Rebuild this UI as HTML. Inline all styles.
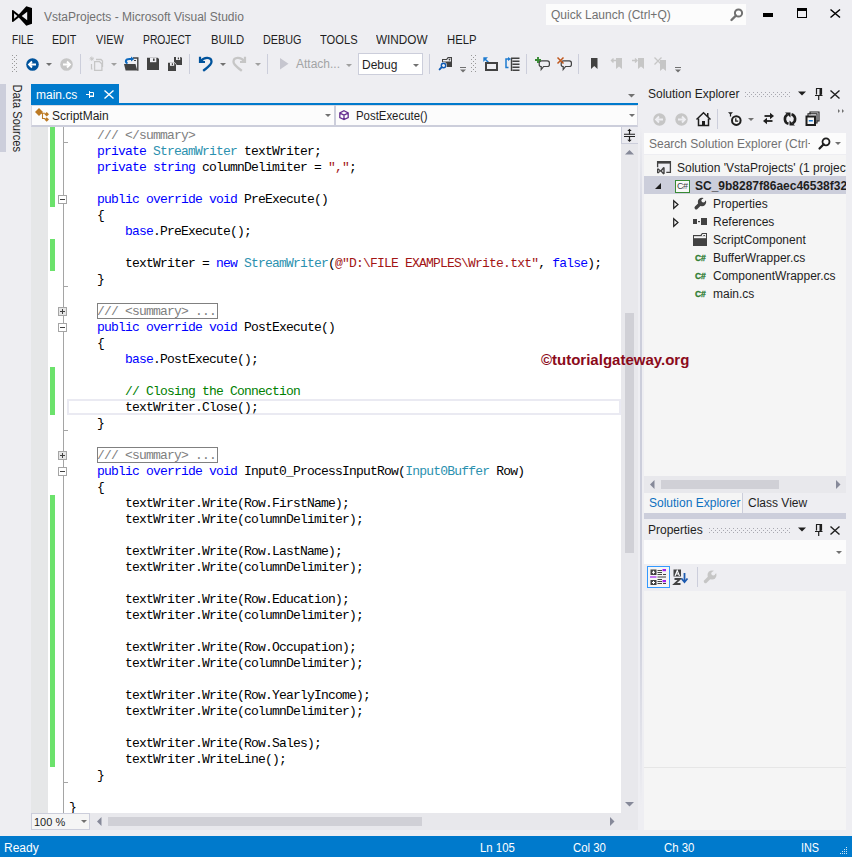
<!DOCTYPE html>
<html><head><meta charset="utf-8">
<style>
*{box-sizing:border-box}
html,body{margin:0;padding:0}
body{width:852px;height:857px;overflow:hidden;position:relative;background:#EEEEF2;font-family:"Liberation Sans",sans-serif;font-size:12px;color:#1E1E1E}
.a{position:absolute}
svg.a{overflow:visible}
.t{position:absolute;white-space:pre;line-height:14px;font-size:12px}
.code{position:absolute;left:69px;top:128px;margin:0;font-family:"Liberation Mono",monospace;font-size:13px;letter-spacing:-0.8px;line-height:16px;white-space:pre;color:#000}
.k{color:#0000FF}.ty{color:#2B91AF}.s{color:#A31515}.c{color:#008000}.g{color:#808080}
</style></head><body>

<svg class="a" style="left:12px;top:6px;" width="21" height="21" viewBox="0 0 21 21"><path d="M0 4.8 Q0 3.8 1 4 L6.8 8.5 L14.3 0.2 L20 2 V17.8 L14.3 19.8 L6.8 11.5 L1 16 Q0 16.2 0 15.2 Z M2.1 7.2 V12.8 L5.3 10 Z M9.7 10 L15.2 5.8 V14.2 Z" fill="#000" fill-rule="evenodd"/></svg>
<div class="t" style="left:44px;top:10px;color:#717171;">VstaProjects - Microsoft Visual Studio</div>
<div class="a" style="left:546px;top:4px;width:200px;height:21px;background:#FCFCFC;"></div>
<div class="t" style="left:551px;top:8px;color:#717171;">Quick Launch (Ctrl+Q)</div>
<svg class="a" style="left:730px;top:8px;" width="14" height="14" viewBox="0 0 14 14"><circle cx="8.5" cy="5" r="3.6" fill="none" stroke="#717171" stroke-width="2"/><path d="M6 7.5 L1.5 12" stroke="#717171" stroke-width="2.4" stroke-linecap="round"/></svg>
<div class="a" style="left:763px;top:13px;width:10px;height:4px;background:#000;"></div>
<div class="a" style="left:797px;top:8px;width:10px;height:10px;border:1px solid #000;border-top-width:3px"></div>
<svg class="a" style="left:830px;top:9px;" width="11" height="9" viewBox="0 0 11 9"><path d="M0.5 0.5 L10 8.5 M10 0.5 L0.5 8.5" stroke="#000" stroke-width="1.5"/></svg>
<div class="t" style="left:12px;top:33px;transform:scaleX(0.85);transform-origin:0 0;">FILE</div>
<div class="t" style="left:52px;top:33px;transform:scaleX(0.89);transform-origin:0 0;">EDIT</div>
<div class="t" style="left:96px;top:33px;transform:scaleX(0.9);transform-origin:0 0;">VIEW</div>
<div class="t" style="left:143px;top:33px;transform:scaleX(0.86);transform-origin:0 0;">PROJECT</div>
<div class="t" style="left:211px;top:33px;transform:scaleX(0.94);transform-origin:0 0;">BUILD</div>
<div class="t" style="left:263px;top:33px;transform:scaleX(0.9);transform-origin:0 0;">DEBUG</div>
<div class="t" style="left:320px;top:33px;transform:scaleX(0.93);transform-origin:0 0;">TOOLS</div>
<div class="t" style="left:376px;top:33px;transform:scaleX(0.98);transform-origin:0 0;">WINDOW</div>
<div class="t" style="left:447px;top:33px;transform:scaleX(0.94);transform-origin:0 0;">HELP</div>
<div class="a" style="left:12px;top:55px;width:5px;height:18px;background-image:radial-gradient(circle at 0.5px 0.5px,#999 0.6px,transparent 0.8px);background-size:4px 4px"></div>
<div class="a" style="left:14px;top:57px;width:4px;height:16px;background-image:radial-gradient(circle at 0.5px 0.5px,#999 0.6px,transparent 0.8px);background-size:4px 4px"></div>
<svg class="a" style="left:26px;top:58px;" width="13" height="13" viewBox="0 0 13 13"><circle cx="6.5" cy="6.5" r="6.3" fill="#00539C"/><path d="M3 6.5 H10 M6 3.5 L3 6.5 L6 9.5" stroke="#fff" stroke-width="1.8" fill="none"/></svg>
<svg class="a" style="left:46px;top:63px;" width="6" height="3" viewBox="0 0 6 3"><path d="M0 0 H6 L3 3 Z" fill="#717171"/></svg>
<svg class="a" style="left:60px;top:58px;" width="13" height="13" viewBox="0 0 13 13"><circle cx="6.5" cy="6.5" r="6.3" fill="#C6C6C6"/><path d="M3 6.5 H10 M7 3.5 L10 6.5 L7 9.5" stroke="#fff" stroke-width="1.8" fill="none"/></svg>
<div class="a" style="left:80px;top:54px;width:1px;height:20px;background:#CCCEDB;"></div>
<svg class="a" style="left:89px;top:56px;" width="15" height="16" viewBox="0 0 15 16"><path d="M1.2 1.2 L4.3 4.3 M4.3 1.2 L1.2 4.3 M2.75 0.5 V5 M0.5 2.75 H5" stroke="#C6C6C6" stroke-width="0.9"/><path d="M7 3.5 H12 L13.5 5 V11" stroke="#C6C6C6" stroke-width="1.3" fill="none"/><path d="M2.5 8 V13 H3.5" stroke="#C6C6C6" stroke-width="1.2" fill="none"/><path d="M5.6 5.6 H10.5 L12.9 8 V14.4 H5.6 Z" stroke="#C6C6C6" stroke-width="1.3" fill="#EEEEF2"/></svg>
<svg class="a" style="left:111px;top:63px;" width="6" height="3" viewBox="0 0 6 3"><path d="M0 0 H6 L3 3 Z" fill="#A0A0A0"/></svg>
<svg class="a" style="left:124px;top:57px;" width="15" height="15" viewBox="0 0 15 15"><path d="M9 1 H13.8 V13.8" stroke="#424242" stroke-width="1.4" fill="none"/><rect x="10" y="3" width="2" height="1" fill="#424242"/><path d="M0 7 H11.5 L13.2 13.6 H1.6 Z" fill="#424242"/><path d="M3.5 6.5 C0.8 5 1.5 2 5.5 2 H7.5" stroke="#0E6ABF" stroke-width="2" fill="none"/><path d="M7 -0.6 L10.2 2 L7 4.6 Z" fill="#0E6ABF"/></svg>
<svg class="a" style="left:147px;top:57px;" width="12" height="13" viewBox="0 0 12 13"><path d="M0 0.8 H10.7 L12 2.1 V13 H0 Z" fill="#424242"/><rect x="3" y="0.8" width="6.3" height="4.4" fill="#EEEEF2"/><rect x="6" y="1.5" width="1.6" height="2.4" fill="#424242"/></svg>
<svg class="a" style="left:168px;top:57px;" width="15" height="14" viewBox="0 0 15 14"><path d="M6 0 H13 L14 1 V8 H6 Z" fill="#424242"/><rect x="8" y="0" width="4.2" height="3" fill="#EEEEF2"/><rect x="9.8" y="0.5" width="1.2" height="1.8" fill="#424242"/><path d="M0 5.8 H7 L8 6.8 V14 H0 Z" fill="#424242"/><rect x="2" y="5.8" width="4.2" height="3" fill="#EEEEF2"/><rect x="3.8" y="6.3" width="1.2" height="1.8" fill="#424242"/><path d="M6.3 5.2 L8.5 7.8" stroke="#EEEEF2" stroke-width="0.8"/></svg>
<div class="a" style="left:189px;top:54px;width:1px;height:20px;background:#CCCEDB;"></div>
<svg class="a" style="left:198px;top:56px;" width="15" height="16" viewBox="0 0 15 16"><path d="M2 0.8 V6 H7" stroke="#00539C" stroke-width="2.2" fill="none"/><path d="M3 5 C6 0.8 13.5 0.8 13.5 5.8 C13.5 9 10 11 5.2 14.8" stroke="#00539C" stroke-width="2.3" fill="none"/></svg>
<svg class="a" style="left:220px;top:63px;" width="6" height="3" viewBox="0 0 6 3"><path d="M0 0 H6 L3 3 Z" fill="#717171"/></svg>
<svg class="a" style="left:232px;top:56px;" width="15" height="16" viewBox="0 0 15 16"><path d="M13 0.8 V6 H8" stroke="#C6C6C6" stroke-width="2.2" fill="none"/><path d="M12 5 C9 0.8 1.5 0.8 1.5 5.8 C1.5 9 5 11 9.8 14.8" stroke="#C6C6C6" stroke-width="2.3" fill="none"/></svg>
<svg class="a" style="left:255px;top:63px;" width="6" height="3" viewBox="0 0 6 3"><path d="M0 0 H6 L3 3 Z" fill="#A0A0A0"/></svg>
<div class="a" style="left:267px;top:54px;width:1px;height:20px;background:#CCCEDB;"></div>
<svg class="a" style="left:280px;top:58px;" width="9" height="12" viewBox="0 0 9 12"><path d="M0 0 L8.5 5.7 L0 11.5 Z" fill="#C6C6CF"/></svg>
<div class="t" style="left:296px;top:57px;color:#A2A4A5;">Attach...</div>
<svg class="a" style="left:346px;top:64px;" width="6" height="3" viewBox="0 0 6 3"><path d="M0 0 H6 L3 3 Z" fill="#A0A0A0"/></svg>
<div class="a" style="left:358px;top:53px;width:65px;height:22px;background:#fff;border:1px solid #CCCEDB"></div>
<div class="t" style="left:362px;top:58px;">Debug</div>
<svg class="a" style="left:413px;top:64px;" width="6" height="3" viewBox="0 0 6 3"><path d="M0 0 H6 L3 3 Z" fill="#717171"/></svg>
<div class="a" style="left:429px;top:54px;width:1px;height:20px;background:#CCCEDB;"></div>
<svg class="a" style="left:438px;top:56px;" width="15" height="15" viewBox="0 0 15 15"><path d="M4 3 H8.3 L9.8 1 H14 V11 H4 Z" fill="#424242"/><path d="M5 4 H9 L10.3 2.2 H13 V5.6 H5 Z" fill="#EEEEF2"/><circle cx="11.5" cy="3.6" r="0.9" fill="#424242"/><circle cx="5.5" cy="9.5" r="3.4" fill="#EEEEF2"/><circle cx="5.5" cy="9.5" r="2.2" fill="#EEEEF2" stroke="#0E5BB5" stroke-width="1.4"/><path d="M3.8 11.2 L1.6 13.4" stroke="#0E5BB5" stroke-width="1.9" stroke-linecap="round"/></svg>
<svg class="a" style="left:460px;top:67px;" width="6" height="6" viewBox="0 0 6 6"><rect x="0" y="0" width="6" height="1" fill="#717171"/><path d="M0 2.5 H6 L3 5.5 Z" fill="#717171"/></svg>
<div class="a" style="left:471px;top:55px;width:5px;height:18px;background-image:radial-gradient(circle at 0.5px 0.5px,#999 0.6px,transparent 0.8px);background-size:4px 4px"></div>
<div class="a" style="left:473px;top:57px;width:4px;height:16px;background-image:radial-gradient(circle at 0.5px 0.5px,#999 0.6px,transparent 0.8px);background-size:4px 4px"></div>
<svg class="a" style="left:483px;top:57px;" width="15" height="14" viewBox="0 0 15 14"><path d="M1.5 1.5 L5.5 5.5" stroke="#1E7BD0" stroke-width="1.6"/><path d="M0.3 0.3 H5 L0.3 5 Z" fill="#1E7BD0"/><rect x="3" y="6" width="11" height="7" fill="none" stroke="#424242" stroke-width="2"/><rect x="5" y="8.5" width="7" height="2" fill="#EEEEF2"/></svg>
<svg class="a" style="left:505px;top:57px;" width="15" height="14" viewBox="0 0 15 14"><path d="M3.5 2 H1 V10.5 H3.5" fill="none" stroke="#1E7BD0" stroke-width="1.5"/><path d="M3 0 L6 2 L3 4 Z" fill="#1E7BD0"/><path d="M6 1.2 H14.5 M7.5 4.2 H14.5 M7.5 7.2 H14.5 M7.5 10.2 H14.5 M7.5 13.2 H14.5 M6.5 1 V14" stroke="#424242" stroke-width="1.4"/></svg>
<div class="a" style="left:526px;top:54px;width:1px;height:20px;background:#CCCEDB;"></div>
<svg class="a" style="left:535px;top:57px;" width="16" height="14" viewBox="0 0 16 14"><path d="M6.5 3.8 H12.3 Q14.4 3.8 14.4 5.9 V7.4 Q14.4 9.5 12.3 9.5 H8.6 L6.2 12.6 V9.5 Q4.2 9.5 4.2 7.4 V5.9 Q4.2 3.8 6.5 3.8 Z" fill="#EEEEF2" stroke="#424242" stroke-width="1.2"/><path d="M3 0 V6 M0 3 H6" stroke="#388A34" stroke-width="1.9"/></svg>
<svg class="a" style="left:557px;top:57px;" width="16" height="14" viewBox="0 0 16 14"><path d="M6.5 3.8 H12.3 Q14.4 3.8 14.4 5.9 V7.4 Q14.4 9.5 12.3 9.5 H8.6 L6.2 12.6 V9.5 Q4.2 9.5 4.2 7.4 V5.9 Q4.2 3.8 6.5 3.8 Z" fill="#EEEEF2" stroke="#424242" stroke-width="1.2"/><path d="M0.5 0.5 L6.5 6.5 M6.5 0.5 L0.5 6.5" stroke="#C0581E" stroke-width="1.5"/></svg>
<div class="a" style="left:578px;top:54px;width:1px;height:20px;background:#CCCEDB;"></div>
<svg class="a" style="left:591px;top:58px;" width="7" height="11" viewBox="0 0 7 11"><path d="M0 0 H6.5 V11 L3.25 8 L0 11 Z" fill="#424242"/></svg>
<svg class="a" style="left:611px;top:57px;" width="12" height="13" viewBox="0 0 12 13"><path d="M5 1 H11 V12 L8 9.5 L5 12 Z" fill="#C6C6C6"/><path d="M0.5 3.5 H5 M2.5 1.5 L0.5 3.5 L2.5 5.5" stroke="#C6C6C6" stroke-width="1.4" fill="none"/></svg>
<svg class="a" style="left:632px;top:57px;" width="13" height="13" viewBox="0 0 13 13"><path d="M6 1 H12 V12 L9 9.5 L6 12 Z" fill="#C6C6C6"/><path d="M0 3.5 H5 M3 1.5 L5 3.5 L3 5.5" stroke="#C6C6C6" stroke-width="1.4" fill="none"/></svg>
<svg class="a" style="left:654px;top:57px;" width="13" height="14" viewBox="0 0 13 14"><path d="M6 3 H12 V14 L9 11.5 L6 14 Z" fill="#C6C6C6"/><path d="M0.5 0.5 L7.5 7.5 M7.5 0.5 L0.5 7.5" stroke="#C6C6C6" stroke-width="1.3"/></svg>
<svg class="a" style="left:675px;top:67px;" width="6" height="6" viewBox="0 0 6 6"><rect x="0" y="0" width="6" height="1" fill="#717171"/><path d="M0 2.5 H6 L3 5.5 Z" fill="#717171"/></svg>
<div class="a" style="left:0px;top:84px;width:6px;height:68px;background:#CCCEDB;"></div>
<div class="t" style="left:-19px;top:111px;width:72px;transform:rotate(90deg) scaleX(0.93);transform-origin:36px 7px;color:#1E1E1E">Data Sources</div>
<svg class="a" style="left:628px;top:94px;" width="7" height="4" viewBox="0 0 7 4"><path d="M0 0 H7 L3.5 3.5 Z" fill="#717171"/></svg>
<div class="a" style="left:31px;top:84px;width:88px;height:21px;background:#007ACC;"></div>
<div class="a" style="left:31px;top:103px;width:607px;height:2px;background:#007ACC;"></div>
<div class="t" style="left:36px;top:88px;color:#fff;">main.cs</div>
<svg class="a" style="left:86px;top:91px;" width="9" height="7" viewBox="0 0 9 7"><path d="M0 3.5 H3.5 M3.5 0 V7" stroke="#fff" stroke-width="1" fill="none"/><path d="M4 1.5 H7.5 V5.5 H4" stroke="#fff" stroke-width="1" fill="none"/><rect x="4" y="4.5" width="4" height="1.5" fill="#fff"/></svg>
<svg class="a" style="left:104px;top:90px;" width="10" height="9" viewBox="0 0 10 9"><path d="M0.5 0.5 L9.5 8.5 M9.5 0.5 L0.5 8.5" stroke="#fff" stroke-width="1.4"/></svg>
<div class="a" style="left:31px;top:105px;width:607px;height:22px;background:#FCFCFC;border-bottom:2px solid #CCCEDB;border-left:1px solid #DADAE2;border-top:1px solid #DADAE2;border-right:1px solid #DADAE2"></div>
<div class="a" style="left:334px;top:105px;width:2px;height:20px;background:#CCCEDB;"></div>
<svg class="a" style="left:35px;top:108px;" width="15" height="14" viewBox="0 0 15 14"><path d="M0 4 L4 0 L8 4 L4 8 Z" fill="#BC7A24"/><path d="M6 5.2 H10 M7.5 5.2 V10.5 H10" stroke="#BC7A24" stroke-width="1.1" fill="none"/><path d="M9.4 6.2 L11.7 3.9 L14 6.2 L11.7 8.5 Z M9.4 11.5 L11.7 9.2 L14 11.5 L11.7 13.8 Z" fill="#BC7A24"/></svg>
<div class="t" style="left:52px;top:109px;">ScriptMain</div>
<svg class="a" style="left:325px;top:114px;" width="6" height="3" viewBox="0 0 6 3"><path d="M0 0 H6 L3 3 Z" fill="#717171"/></svg>
<svg class="a" style="left:339px;top:110px;" width="10" height="10" viewBox="0 0 10 10"><path d="M5 0.7 L9.2 3 V7.5 L5 9.5 L0.8 7.5 V3 Z M0.8 3 L5 5.2 L9.2 3 M5 5.2 V9.5" stroke="#652D90" stroke-width="1.3" fill="none"/></svg>
<div class="t" style="left:356px;top:109px;transform:scaleX(0.95);transform-origin:0 0;">PostExecute()</div>
<svg class="a" style="left:629px;top:114px;" width="6" height="3" viewBox="0 0 6 3"><path d="M0 0 H6 L3 3 Z" fill="#717171"/></svg>
<div class="a" style="left:31px;top:127px;width:590px;height:686px;background:#fff;"></div>
<div class="a" style="left:31px;top:127px;width:17px;height:686px;background:#E6E7E8;"></div>
<div class="a" style="left:50px;top:127px;width:5px;height:80px;background:#6CE26C;"></div>
<div class="a" style="left:50px;top:239px;width:5px;height:32px;background:#6CE26C;"></div>
<div class="a" style="left:50px;top:367px;width:5px;height:48px;background:#6CE26C;"></div>
<div class="a" style="left:50px;top:495px;width:5px;height:272px;background:#6CE26C;"></div>
<div class="a" style="left:63px;top:127px;width:1px;height:686px;background:#A5A5A5;"></div>
<div class="a" style="left:63px;top:142px;width:5px;height:1px;background:#A5A5A5;"></div>
<div class="a" style="left:63px;top:286px;width:5px;height:1px;background:#A5A5A5;"></div>
<div class="a" style="left:63px;top:430px;width:5px;height:1px;background:#A5A5A5;"></div>
<div class="a" style="left:63px;top:782px;width:5px;height:1px;background:#A5A5A5;"></div>
<div class="a" style="left:58px;top:195px;width:9px;height:9px;background:#fff;border:1px solid #A5A5A5"></div>
<div class="a" style="left:60px;top:199px;width:5px;height:1px;background:#424242;"></div>
<div class="a" style="left:58px;top:307px;width:9px;height:9px;background:#E6E6E6;border:1px solid #A5A5A5"></div>
<div class="a" style="left:60px;top:311px;width:5px;height:1px;background:#424242;"></div>
<div class="a" style="left:62px;top:309px;width:1px;height:5px;background:#424242;"></div>
<div class="a" style="left:58px;top:323px;width:9px;height:9px;background:#fff;border:1px solid #A5A5A5"></div>
<div class="a" style="left:60px;top:327px;width:5px;height:1px;background:#424242;"></div>
<div class="a" style="left:58px;top:451px;width:9px;height:9px;background:#E6E6E6;border:1px solid #A5A5A5"></div>
<div class="a" style="left:60px;top:455px;width:5px;height:1px;background:#424242;"></div>
<div class="a" style="left:62px;top:453px;width:1px;height:5px;background:#424242;"></div>
<div class="a" style="left:58px;top:467px;width:9px;height:9px;background:#fff;border:1px solid #A5A5A5"></div>
<div class="a" style="left:60px;top:471px;width:5px;height:1px;background:#424242;"></div>
<div class="a" style="left:97px;top:303px;width:121px;height:16px;border:1px solid #808080"></div>
<div class="a" style="left:97px;top:447px;width:121px;height:16px;border:1px solid #808080"></div>
<div class="a" style="left:67px;top:399px;width:554px;height:16px;border:2px solid #EAEAF2"></div>
<pre class="code" style="margin:0">    <span class="g">/// &lt;/summary&gt;</span>
    <span class="k">private</span> <span class="ty">StreamWriter</span> textWriter;
    <span class="k">private</span> <span class="k">string</span> columnDelimiter = <span class="s">","</span>;

    <span class="k">public</span> <span class="k">override</span> <span class="k">void</span> PreExecute()
    {
        <span class="k">base</span>.PreExecute();

        textWriter = <span class="k">new</span> <span class="ty">StreamWriter</span>(<span class="s">@"D:\FILE EXAMPLES\Write.txt"</span>, <span class="k">false</span>);
    }

    <span class="g">/// &lt;summary&gt; ...</span>
    <span class="k">public</span> <span class="k">override</span> <span class="k">void</span> PostExecute()
    {
        <span class="k">base</span>.PostExecute();

        <span class="c">// Closing the Connection</span>
        textWriter.Close();
    }

    <span class="g">/// &lt;summary&gt; ...</span>
    <span class="k">public</span> <span class="k">override</span> <span class="k">void</span> Input0_ProcessInputRow(<span class="ty">Input0Buffer</span> Row)
    {
        textWriter.Write(Row.FirstName);
        textWriter.Write(columnDelimiter);

        textWriter.Write(Row.LastName);
        textWriter.Write(columnDelimiter);

        textWriter.Write(Row.Education);
        textWriter.Write(columnDelimiter);

        textWriter.Write(Row.Occupation);
        textWriter.Write(columnDelimiter);

        textWriter.Write(Row.YearlyIncome);
        textWriter.Write(columnDelimiter);

        textWriter.Write(Row.Sales);
        textWriter.WriteLine();
    }

}</pre>
<div class="a" style="left:621px;top:127px;width:17px;height:686px;background:#E8E8EC;"></div>
<div class="a" style="left:621px;top:127px;width:17px;height:17px;background:#EBEBF0;border-left:1px solid #CCCEDB;border-bottom:1px solid #CCCEDB"></div>
<svg class="a" style="left:624px;top:128px;" width="11" height="15" viewBox="0 0 11 15"><path d="M0 6.3 H11 M0 8.5 H11" stroke="#1E1E1E" stroke-width="1.1"/><path d="M5.5 2 V6.3 M5.5 8.5 V12.8" stroke="#1E1E1E" stroke-width="1.2"/><path d="M3.3 3 L5.5 0.8 L7.7 3 Z M3.3 11.8 L5.5 14 L7.7 11.8 Z" fill="#1E1E1E"/></svg>
<svg class="a" style="left:625px;top:150px;" width="9" height="5" viewBox="0 0 9 5"><path d="M0 4.5 L4.5 0 L9 4.5 Z" fill="#868999"/></svg>
<div class="a" style="left:625px;top:313px;width:9px;height:240px;background:#D0D0D6;"></div>
<svg class="a" style="left:625px;top:802px;" width="9" height="5" viewBox="0 0 9 5"><path d="M0 0 H9 L4.5 4.5 Z" fill="#868999"/></svg>
<div class="a" style="left:31px;top:813px;width:607px;height:17px;background:#E8E8EC;"></div>
<div class="a" style="left:31px;top:813px;width:59px;height:17px;background:#F5F5F5;border:1px solid #CCCEDB"></div>
<div class="t" style="left:34px;top:815px;font-size:11px;">100 %</div>
<svg class="a" style="left:81px;top:820px;" width="6" height="3" viewBox="0 0 6 3"><path d="M0 0 H6 L3 3 Z" fill="#717171"/></svg>
<svg class="a" style="left:97px;top:817px;" width="5" height="9" viewBox="0 0 5 9"><path d="M4.5 0 V9 L0 4.5 Z" fill="#868999"/></svg>
<div class="a" style="left:108px;top:817px;width:314px;height:9px;background:#D0D0D6;"></div>
<svg class="a" style="left:610px;top:817px;" width="5" height="9" viewBox="0 0 5 9"><path d="M0 0 V9 L4.5 4.5 Z" fill="#868999"/></svg>
<div class="a" style="left:640px;top:127px;width:2px;height:680px;background:linear-gradient(#EEEEF2 0px,#CCCEDB 130px,#CCCEDB 480px,#EEEEF2 680px);"></div>
<div class="t" style="left:648px;top:87px;">Solution Explorer</div>
<svg class="a" style="left:745px;top:92px;" width="45" height="5" viewBox="0 0 45 5"><defs><pattern id="gp" width="4" height="4" patternUnits="userSpaceOnUse"><rect width="1" height="1" fill="#A8A8B0"/><rect x="2" y="2" width="1" height="1" fill="#A8A8B0"/></pattern></defs><rect width="45" height="5" fill="url(#gp)"/></svg>
<svg class="a" style="left:798px;top:91px;" width="8" height="5" viewBox="0 0 8 5"><path d="M0 0.5 H8 L4 4.5 Z" fill="#1E1E1E"/></svg>
<svg class="a" style="left:815px;top:88px;" width="8" height="12" viewBox="0 0 8 12"><path d="M1 0.5 H6.5 V6.5 M1.5 0.5 V6.5" stroke="#1E1E1E" stroke-width="1.2" fill="none"/><rect x="4.5" y="0.5" width="2" height="6.5" fill="#1E1E1E"/><path d="M0 7.5 H7.5 M3.7 7.5 V12" stroke="#1E1E1E" stroke-width="1.2"/></svg>
<svg class="a" style="left:830px;top:90px;" width="10" height="9" viewBox="0 0 10 9"><path d="M0.5 0.5 L9.5 8.5 M9.5 0.5 L0.5 8.5" stroke="#1E1E1E" stroke-width="1.4"/></svg>
<svg class="a" style="left:653px;top:113px;" width="13" height="13" viewBox="0 0 13 13"><circle cx="6.5" cy="6.5" r="6.2" fill="#C6C6C6"/><path d="M3 6.5 H10 M6 3.5 L3 6.5 L6 9.5" stroke="#EEEEF2" stroke-width="1.8" fill="none"/></svg>
<svg class="a" style="left:675px;top:113px;" width="13" height="13" viewBox="0 0 13 13"><circle cx="6.5" cy="6.5" r="6.2" fill="#C6C6C6"/><path d="M3 6.5 H10 M7 3.5 L10 6.5 L7 9.5" stroke="#EEEEF2" stroke-width="1.8" fill="none"/></svg>
<svg class="a" style="left:696px;top:112px;" width="15" height="14" viewBox="0 0 15 14"><path d="M0.5 7.5 L7.5 0.8 L14.5 7.5" stroke="#1E1E1E" stroke-width="1.5" fill="none"/><path d="M2.5 6.5 V13.5 H12.5 V6.5" stroke="#1E1E1E" stroke-width="1.5" fill="none"/><rect x="6" y="9" width="3" height="4.5" fill="#1E1E1E"/><rect x="11" y="1" width="1.5" height="4" fill="#1E1E1E"/></svg>
<div class="a" style="left:717px;top:109px;width:1px;height:20px;background:#CCCEDB;"></div>
<svg class="a" style="left:728px;top:112px;" width="14" height="14" viewBox="0 0 14 14"><path d="M0 0.3 H5 L2.5 2.8 Z" fill="#1E1E1E"/><path d="M2.5 2 V4.5" stroke="#1E1E1E" stroke-width="1.2"/><circle cx="8.3" cy="8.6" r="4.3" fill="#F5F5F5" stroke="#1E1E1E" stroke-width="2"/><path d="M7.8 6.3 V9.2 H10.2" stroke="#1E1E1E" stroke-width="1.3" fill="none"/></svg>
<svg class="a" style="left:748px;top:118px;" width="6" height="3" viewBox="0 0 6 3"><path d="M0 0 H6 L3 3 Z" fill="#717171"/></svg>
<svg class="a" style="left:762px;top:112px;" width="13" height="13" viewBox="0 0 13 13"><path d="M2.5 4 H9" stroke="#1E1E1E" stroke-width="1.8"/><path d="M8 0.8 L12 4 L8 7.2 Z" fill="#1E1E1E"/><path d="M10.5 9 H4" stroke="#1E1E1E" stroke-width="1.8"/><path d="M5 5.8 L1 9 L5 12.2 Z" fill="#1E1E1E"/></svg>
<svg class="a" style="left:783px;top:112px;" width="14" height="14" viewBox="0 0 14 14"><path d="M4.5 2.6 A5 5 0 0 0 5.5 11.8" stroke="#1E1E1E" stroke-width="2.6" fill="none"/><path d="M9.5 11.4 A5 5 0 0 0 8.5 2.2" stroke="#1E1E1E" stroke-width="2.6" fill="none"/><path d="M2 0.5 H7.5 V5.5 Z" fill="#1E1E1E"/><path d="M12 13.5 H6.5 V8.5 Z" fill="#1E1E1E"/></svg>
<svg class="a" style="left:805px;top:111px;" width="15" height="15" viewBox="0 0 15 15"><path d="M5 3.5 V1 H14 V10 H11.5" stroke="#1E1E1E" stroke-width="1.1" fill="none"/><path d="M3 5 V2.8 H12 V12 H10" stroke="#1E1E1E" stroke-width="1.1" fill="none"/><rect x="1.5" y="5.5" width="8.5" height="8.5" fill="#F5F5F5" stroke="#1E1E1E" stroke-width="2"/><rect x="3.8" y="9" width="4" height="1.5" fill="#1E7BD0"/></svg>
<svg class="a" style="left:838px;top:109px;" width="7" height="4" viewBox="0 0 7 4"><path d="M0 0 L2 2 L0 4 Z M4 0 L6 2 L4 4 Z" fill="#717171"/></svg>
<div class="a" style="left:644px;top:133px;width:202px;height:21px;background:#FCFCFC;"></div>
<div class="t" style="left:649px;top:137px;color:#717171;">Search Solution Explorer (Ctrl+;)</div>
<div class="a" style="left:810px;top:133px;width:36px;height:21px;background:#FCFCFC;"></div>
<svg class="a" style="left:818px;top:137px;" width="13" height="13" viewBox="0 0 13 13"><circle cx="8" cy="4.8" r="3.5" fill="none" stroke="#1E1E1E" stroke-width="1.8"/><path d="M5.7 7.2 L1.5 11.5" stroke="#1E1E1E" stroke-width="2.2" stroke-linecap="round"/></svg>
<svg class="a" style="left:835px;top:142px;" width="6" height="3" viewBox="0 0 6 3"><path d="M0 0 H6 L3 3 Z" fill="#717171"/></svg>
<div class="a" style="left:644px;top:155px;width:202px;height:321px;background:#F5F5F5;"></div>
<div class="a" style="left:0;top:0;width:846px;height:857px;overflow:hidden">
<div class="a" style="left:644px;top:176px;width:202px;height:18px;background:#CCCEDB;"></div>
<svg class="a" style="left:657px;top:161px;" width="15" height="14" viewBox="0 0 15 14"><rect x="1" y="2" width="12.5" height="9" fill="#EEEEF2"/><rect x="0" y="0" width="14" height="2.6" fill="#424242"/><path d="M0.6 0 V6.3 M13.4 0 V11.3 H9.3" stroke="#424242" stroke-width="1.3" fill="none"/><path d="M0 7.8 L1.2 7.2 L3.6 9.3 L6.3 6 L7.7 6.6 V12.8 L6.3 13.6 L3.6 10.4 L1.2 12.5 L0 11.9 Z M1.3 8.9 V10.9 L2.6 9.9 Z M4.8 9.9 L6.3 8.4 V11.3 Z" fill="#424242" fill-rule="evenodd"/></svg>
<div class="t" style="left:677px;top:161px;">Solution 'VstaProjects' (1 project)</div>
<svg class="a" style="left:655px;top:183px;" width="6" height="6" viewBox="0 0 6 6"><path d="M6 0 V6 H0 Z" fill="#1E1E1E"/></svg>
<div class="a" style="left:675px;top:180px;width:15px;height:13px;background:#F8F8F8;border:1.5px solid #388A34"></div>
<div class="t" style="left:677px;top:179px;color:#424242;font-size:9px;letter-spacing:-0.4px">C#</div>
<div class="t" style="left:695px;top:179px;font-weight:bold;">SC_9b8287f86aec46538f32</div>
<svg class="a" style="left:673px;top:200px;" width="6" height="9" viewBox="0 0 6 9"><path d="M0.7 0.7 L5 4.5 L0.7 8.3 Z" fill="none" stroke="#1E1E1E" stroke-width="1.2"/></svg>
<svg class="a" style="left:694px;top:197px;" width="13" height="13" viewBox="0 0 13 13"><circle cx="8" cy="5" r="4.2" fill="#424242"/><path d="M6.5 6.5 L2.2 10.8" stroke="#424242" stroke-width="3.4" stroke-linecap="round"/><circle cx="9.3" cy="3.6" r="1.9" fill="#F5F5F5"/><path d="M9.3 3.6 L13 -0.1" stroke="#F5F5F5" stroke-width="3.2"/></svg>
<div class="t" style="left:713px;top:197px;">Properties</div>
<svg class="a" style="left:673px;top:218px;" width="6" height="9" viewBox="0 0 6 9"><path d="M0.7 0.7 L5 4.5 L0.7 8.3 Z" fill="none" stroke="#1E1E1E" stroke-width="1.2"/></svg>
<svg class="a" style="left:693px;top:218px;" width="15" height="8" viewBox="0 0 15 8"><rect x="0" y="1" width="4" height="5" fill="#424242"/><rect x="5" y="3" width="2" height="1.2" fill="#424242"/><rect x="8" y="0" width="6" height="7" fill="#424242"/></svg>
<div class="t" style="left:713px;top:215px;">References</div>
<svg class="a" style="left:693px;top:233px;" width="15" height="13" viewBox="0 0 15 13"><path d="M0 2 H7.5 L9 0 H14 V13 H0 Z" fill="#424242"/><rect x="1" y="3.2" width="12" height="2" fill="#F5F5F5"/><path d="M9.5 1 H13 V3.2 H8.5 Z" fill="#F5F5F5"/><rect x="10.3" y="2" width="1.8" height="0.9" fill="#424242"/></svg>
<div class="t" style="left:713px;top:233px;">ScriptComponent</div>
<div class="t" style="left:695px;top:251px;color:#2E7D32;font-size:8.5px;font-weight:bold;letter-spacing:-0.2px;-webkit-text-stroke:0.3px #2E7D32">C#</div>
<div class="t" style="left:713px;top:251px;">BufferWrapper.cs</div>
<div class="t" style="left:695px;top:269px;color:#2E7D32;font-size:8.5px;font-weight:bold;letter-spacing:-0.2px;-webkit-text-stroke:0.3px #2E7D32">C#</div>
<div class="t" style="left:713px;top:269px;">ComponentWrapper.cs</div>
<div class="t" style="left:695px;top:287px;color:#2E7D32;font-size:8.5px;font-weight:bold;letter-spacing:-0.2px;-webkit-text-stroke:0.3px #2E7D32">C#</div>
<div class="t" style="left:713px;top:287px;">main.cs</div>
</div>
<div class="a" style="left:644px;top:476px;width:202px;height:17px;background:#E8E8EC;"></div>
<svg class="a" style="left:650px;top:480px;" width="5" height="9" viewBox="0 0 5 9"><path d="M4.5 0 V9 L0 4.5 Z" fill="#868999"/></svg>
<div class="a" style="left:661px;top:480px;width:118px;height:9px;background:#D0D0D6;"></div>
<svg class="a" style="left:836px;top:480px;" width="5" height="9" viewBox="0 0 5 9"><path d="M0 0 V9 L4.5 4.5 Z" fill="#868999"/></svg>
<div class="a" style="left:644px;top:493px;width:98px;height:20px;background:#F5F5F5;"></div>
<div class="a" style="left:742px;top:493px;width:1px;height:20px;background:#CCCEDB;"></div>
<div class="t" style="left:649px;top:496px;color:#0E70C0;">Solution Explorer</div>
<div class="t" style="left:748px;top:496px;">Class View</div>
<div class="a" style="left:644px;top:513px;width:202px;height:6px;background:#CCCEDB;"></div>
<div class="t" style="left:648px;top:523px;">Properties</div>
<svg class="a" style="left:709px;top:528px;" width="81" height="5" viewBox="0 0 81 5"><rect width="81" height="5" fill="url(#gp)"/></svg>
<svg class="a" style="left:798px;top:527px;" width="8" height="5" viewBox="0 0 8 5"><path d="M0 0.5 H8 L4 4.5 Z" fill="#1E1E1E"/></svg>
<svg class="a" style="left:815px;top:524px;" width="8" height="12" viewBox="0 0 8 12"><path d="M1 0.5 H6.5 V6.5 M1.5 0.5 V6.5" stroke="#1E1E1E" stroke-width="1.2" fill="none"/><rect x="4.5" y="0.5" width="2" height="6.5" fill="#1E1E1E"/><path d="M0 7.5 H7.5 M3.7 7.5 V12" stroke="#1E1E1E" stroke-width="1.2"/></svg>
<svg class="a" style="left:830px;top:526px;" width="10" height="9" viewBox="0 0 10 9"><path d="M0.5 0.5 L9.5 8.5 M9.5 0.5 L0.5 8.5" stroke="#1E1E1E" stroke-width="1.4"/></svg>
<div class="a" style="left:644px;top:540px;width:202px;height:24px;background:#FCFCFC;"></div>
<svg class="a" style="left:836px;top:551px;" width="6" height="3" viewBox="0 0 6 3"><path d="M0 0 H6 L3 3 Z" fill="#717171"/></svg>
<div class="a" style="left:647px;top:566px;width:23px;height:22px;background:#F5F5F5;border:1px solid #3399FF"></div>
<svg class="a" style="left:650px;top:569px;" width="17" height="16" viewBox="0 0 17 16"><rect x="0.5" y="0.5" width="6" height="5.5" fill="#424242"/><path d="M3.5 1.8 V4.8 M2 3.3 H5" stroke="#fff" stroke-width="1"/><rect x="0.5" y="11" width="6" height="5" fill="#424242"/><path d="M3.5 12 V15 M2 13.5 H5" stroke="#fff" stroke-width="1"/><path d="M7.5 1.5 H12 M7.5 3.5 H12 M7.5 5.5 H12 M7.5 8 H16 M7.5 10.5 H12 M7.5 12.5 H12 M7.5 14.5 H12 M13 5.5 H16 M13 14.5 H16" stroke="#424242" stroke-width="1"/><rect x="12.5" y="0" width="3.5" height="2.2" fill="#A020F0"/><rect x="12.5" y="11" width="3.5" height="2.2" fill="#A020F0"/><path d="M0 8 H6.5" stroke="#A020F0" stroke-width="1.2"/></svg>
<svg class="a" style="left:673px;top:569px;" width="16" height="16" viewBox="0 0 16 16"><rect x="0.5" y="0.5" width="7.5" height="7" fill="#424242"/><path d="M2 7 L4.25 1.5 L6.5 7 M2.8 5 H5.7" stroke="#fff" stroke-width="1.1" fill="none"/><path d="M1.5 10 H7 L1.5 15 H7.5" stroke="#424242" stroke-width="1.8" fill="none"/><path d="M11.5 4 V12" stroke="#1E5BB0" stroke-width="1.8"/><path d="M8.5 9.5 L11.5 13 L14.5 9.5" stroke="#1E5BB0" stroke-width="1.8" fill="none"/></svg>
<div class="a" style="left:697px;top:567px;width:1px;height:20px;background:#CCCEDB;"></div>
<svg class="a" style="left:703px;top:570px;" width="14" height="14" viewBox="0 0 14 14"><circle cx="9" cy="5" r="4.5" fill="#C6C6C6"/><path d="M7.5 6.5 L2.5 11.5" stroke="#C6C6C6" stroke-width="3.4" stroke-linecap="round"/><circle cx="10.3" cy="3.6" r="2" fill="#EEEEF2"/><path d="M10.3 3.6 L14 -0.1" stroke="#EEEEF2" stroke-width="3.2"/></svg>
<div class="a" style="left:644px;top:591px;width:202px;height:176px;background:#F5F5F5;"></div>
<div class="a" style="left:644px;top:767px;width:202px;height:1px;background:#E6E6E6;"></div>
<div class="a" style="left:644px;top:768px;width:202px;height:62px;background:#F5F5F5;"></div>
<div class="a" style="left:0px;top:836px;width:852px;height:21px;background:#007ACC;"></div>
<div class="t" style="left:4px;top:841px;color:#fff;">Ready</div>
<div class="t" style="left:480px;top:841px;transform:scaleX(0.95);transform-origin:0 0;color:#fff;">Ln 105</div>
<div class="t" style="left:573px;top:841px;transform:scaleX(0.95);transform-origin:0 0;color:#fff;">Col 30</div>
<div class="t" style="left:664px;top:841px;transform:scaleX(0.95);transform-origin:0 0;color:#fff;">Ch 30</div>
<div class="t" style="left:801px;top:841px;transform:scaleX(0.9);transform-origin:0 0;color:#fff;">INS</div>
<svg class="a" style="left:839px;top:846px" width="9" height="9"><rect x="7" y="7" width="1" height="1" fill="#CFE6F5"/><rect x="7" y="5" width="1" height="1" fill="#CFE6F5"/><rect x="7" y="3" width="1" height="1" fill="#CFE6F5"/><rect x="7" y="1" width="1" height="1" fill="#CFE6F5"/><rect x="5" y="7" width="1" height="1" fill="#CFE6F5"/><rect x="5" y="5" width="1" height="1" fill="#CFE6F5"/><rect x="5" y="3" width="1" height="1" fill="#CFE6F5"/><rect x="3" y="7" width="1" height="1" fill="#CFE6F5"/><rect x="3" y="5" width="1" height="1" fill="#CFE6F5"/><rect x="1" y="7" width="1" height="1" fill="#CFE6F5"/></svg>
<div class="t" style="left:541px;top:351px;color:#8B0A1A;font-size:15px;font-weight:bold;line-height:17px">©tutorialgateway.org</div>
</body></html>
